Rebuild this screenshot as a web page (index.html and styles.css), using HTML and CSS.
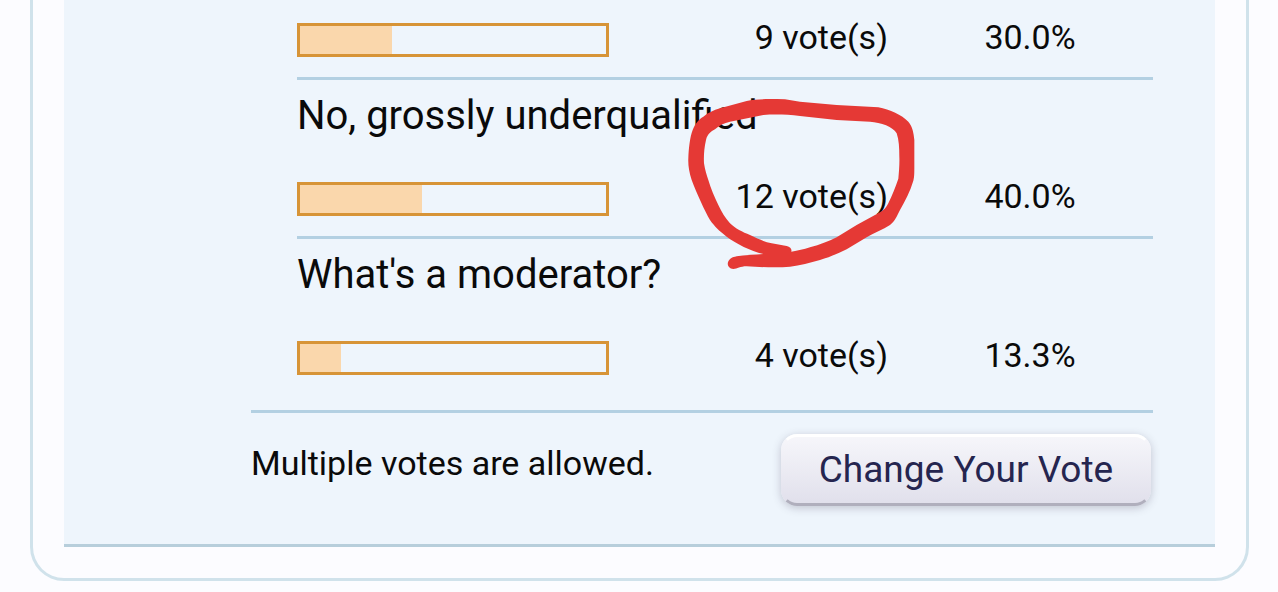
FILE: index.html
```
<!DOCTYPE html>
<html lang="en">

<head>
    <title>Poll results</title>
    <meta charset="utf-8">
    <meta name="viewport" content="width=device-width, initial-scale=1">
    <link rel="stylesheet" href="styles.css">
</head>

<body>
    <div class="frame">
        <form class="poll">
            <table class="results">
                <colgroup>
                    <col class="col_bar">
                    <col>
                    <col class="col_percent">
                </colgroup>
                <tr class="result first">
                    <td><div class="bar"><div class="fill" style="width: 30%"></div></div></td>
                    <td class="votes">9 vote(s)</td>
                    <td class="percent">30.0%</td>
                </tr>
                <tr>
                    <th colspan="3">No, grossly underqualified</th>
                </tr>
                <tr class="result">
                    <td><div class="bar"><div class="fill" style="width: 40%"></div></div></td>
                    <td class="votes">12 vote(s)
                        <svg class="scribble" viewBox="0 0 780 600" aria-hidden="true">
                            <path fill-rule="evenodd" d="M190 567C178 567 171 556 174 547C178 536 186 532 200 529C225 525 250 524 280 522C240 512 200 492 170 470C148 453 134 440 120 420C105 395 80 340 65 300C57 275 54 255 55 235C56 205 60 170 68 150C76 130 86 118 100 110C115 98 130 91 150 85L230 63C260 56 300 57 345 58L390 65L500 75L625 82C660 88 695 105 715 125C728 140 731 160 733 180L733 265C733 285 732 295 730 302C720 335 706 362 690 390C682 406 674 425 660 435C640 448 610 460 590 472L530 508C505 520 480 531 450 540C420 549 390 556 360 560C320 564 270 561 230 559C210 559 202 567 190 567ZM115 300C122 325 134 352 145 375C155 396 165 413 180 430C195 445 218 457 240 465C265 477 285 486 305 490L350 498C361 501 366 506 364 515C385 512 400 508 420 502C450 494 475 485 500 472L560 435L630 397C642 390 649 382 655 370C666 347 676 322 685 296C687 275 689 250 688 230C688 205 687 180 680 160C670 140 632 127 600 125L500 120L390 108C350 103 310 103 280 105L180 125C162 129 148 136 135 148C125 153 112 162 108 180C102 205 101 230 102 250C105 270 110 285 115 300Z" />
                        </svg>
                    </td>
                    <td class="percent">40.0%</td>
                </tr>
                <tr>
                    <th colspan="3">What's a moderator?</th>
                </tr>
                <tr class="result last">
                    <td><div class="bar"><div class="fill" style="width: 13.3%"></div></div></td>
                    <td class="votes">4 vote(s)</td>
                    <td class="percent">13.3%</td>
                </tr>
            </table>
            <div class="footer">
                <span class="note">Multiple votes are allowed.</span>
                <button type="button">Change Your Vote</button>
            </div>
        </form>
    </div>
</body>

</html>
```

FILE: styles.css
```
body {
    font-family: Roboto, sans-serif;
    font-size: 34px;
    line-height: 40px;
    margin: 0;
    background-color: #FCFCFF;
    color: #0A0A0A;
}

.frame {
    margin: 0 29px 12px 30px;
    padding: 0 31px 31px;
    border: 3px solid #D0E2EB;
    border-top: 0;
    border-radius: 0 0 34px 34px;
}

.poll {
    padding: 0 62px 38px 187px;
    background-color: #EEF5FC;
    border-bottom: 3px solid #B7CEDB;
}

.results {
    width: calc(100% - 46px);
    margin-left: 46px;
    table-layout: fixed;
    border-spacing: 0;
}

.col_bar {
    width: 312px;
}

.col_percent {
    width: 246px;
}

th {
    padding: 12px 0 0;
    font-size: 40px;
    font-weight: normal;
    line-height: 48px;
    text-align: left;
}

td {
    padding: 36px 0 20px;
    vertical-align: bottom;
    border-bottom: 3px solid #B3D0E2;
}

.first td {
    padding-top: 17px;
}

.last td {
    padding-bottom: 35px;
    border-bottom: 0;
}

.bar {
    box-sizing: border-box;
    height: 34px;
    border: 3px solid #D79437;
}

.fill {
    height: 100%;
    background-color: #FAD7AC;
}

.result .votes {
    position: relative;
    padding-right: 19px;
    text-align: right;
}

.percent {
    text-align: center;
}

/* pen circle drawn over the votes */
.scribble {
    position: absolute;
    top: -60px;
    right: -23px;
    width: 260px;
    height: 200px;
    fill: #E53935;
    pointer-events: none;
}

.footer {
    display: flex;
    justify-content: space-between;
    align-items: flex-start;
    padding: 21px 2px 0 0;
    border-top: 3px solid #B3D0E2;
}

.note {
    padding-top: 9px;
}

button {
    width: 370px;
    height: 72px;
    padding: 0 0 2px;
    font-family: inherit;
    font-size: 37px;
    color: #25254F;
    background: linear-gradient(#F7F7FB, #E0DFEB) border-box;
    border: 3px solid transparent;
    border-top-color: #FFFFFF;
    border-bottom-color: #B0AFBD;
    border-radius: 16px;
    box-shadow: 0 2px 8px rgba(60, 50, 80, 0.25);
}
```
